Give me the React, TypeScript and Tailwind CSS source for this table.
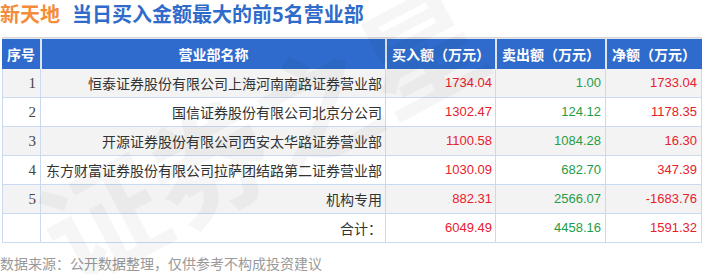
import React from "react";

type Row = {
  no: string;
  name: string;
  buy: string;
  sell: string;
  net: string;
  shaded: boolean;
};

const rows: Row[] = [
  { no: "1", name: "恒泰证券股份有限公司上海河南南路证券营业部", buy: "1734.04", sell: "1.00", net: "1733.04", shaded: true },
  { no: "2", name: "国信证券股份有限公司北京分公司", buy: "1302.47", sell: "124.12", net: "1178.35", shaded: false },
  { no: "3", name: "开源证券股份有限公司西安太华路证券营业部", buy: "1100.58", sell: "1084.28", net: "16.30", shaded: true },
  { no: "4", name: "东方财富证券股份有限公司拉萨团结路第二证券营业部", buy: "1030.09", sell: "682.70", net: "347.39", shaded: false },
  { no: "5", name: "机构专用", buy: "882.31", sell: "2566.07", net: "-1683.76", shaded: true },
  { no: "", name: "合计：", buy: "6049.49", sell: "4458.16", net: "1591.32", shaded: false },
];

const cjk = "font-['Noto_Sans_CJK_SC',sans-serif]";
const num = "font-['Liberation_Sans',sans-serif] text-[13px]";

function DataRow({ row }: { row: Row }) {
  const bg = row.shaded ? "bg-[#f3f3f3]" : "bg-white";
  const cell = `h-[29px] flex items-center justify-end border-r border-b border-[#c7daf0] ${bg}`;
  return (
    <div className="flex border-l border-[#c7daf0]">
      <div className={`${cell} w-[38px] pr-[4px] font-['Liberation_Serif',serif] text-[15px] text-[#444]`}>
        {row.no}
      </div>
      <div className={`${cell} w-[345px] pr-[3px] ${cjk} text-[14px] text-[#333]`}>
        {row.name}
      </div>
      <div className={`${cell} w-[110px] pr-[3px] ${num} text-[#e8202c]`}>{row.buy}</div>
      <div className={`${cell} w-[110px] pr-[4px] ${num} text-[#1f9d47]`}>{row.sell}</div>
      <div className={`${cell} w-[96px] pr-[4px] ${num} text-[#e8202c]`}>{row.net}</div>
    </div>
  );
}

export default function App() {
  const head = `h-[30px] flex items-center bg-[#2f6bcc] text-white font-bold text-[14px] ${cjk}`;
  return (
    <div className="relative w-[703px] h-[274px] bg-white overflow-hidden">
      <div className={`h-[28px] flex items-center gap-[12px] text-[20px] leading-none font-bold ${cjk}`}>
        <span className="text-[#f58c3b]">新天地</span>
        <span className="text-[#2f6bcb]">当日买入金额最大的前5名营业部</span>
      </div>

      <div className="mt-[9px] ml-[2px] w-[700px]">
        <div className="flex gap-[2px] bg-[#dfe4ea] border-t border-[#d9d9d9] pt-[1px]">
          <div className={`${head} w-[38px] pl-[5px]`}>序号</div>
          <div className={`${head} w-[343px] justify-center`}>营业部名称</div>
          <div className={`${head} w-[108px] pl-[5px]`}>买入额（万元）</div>
          <div className={`${head} w-[108px] pl-[5px]`}>卖出额（万元）</div>
          <div className={`${head} w-[95px] pl-[5px]`}>净额（万元）</div>
        </div>
        {rows.map((r, i) => (
          <DataRow key={i} row={r} />
        ))}
      </div>

      <div className={`mt-[13px] text-[14px] text-[#999] ${cjk} leading-none`}>
        数据来源：公开数据整理，仅供参考不构成投资建议
      </div>

      <div
        aria-hidden="true"
        className="pointer-events-none absolute left-[20px] top-[40px] -rotate-[28deg] text-[120px] font-bold text-black/[0.035] whitespace-nowrap font-['Noto_Sans_CJK_SC',sans-serif]"
      >
        证券之星
      </div>
    </div>
  );
}
